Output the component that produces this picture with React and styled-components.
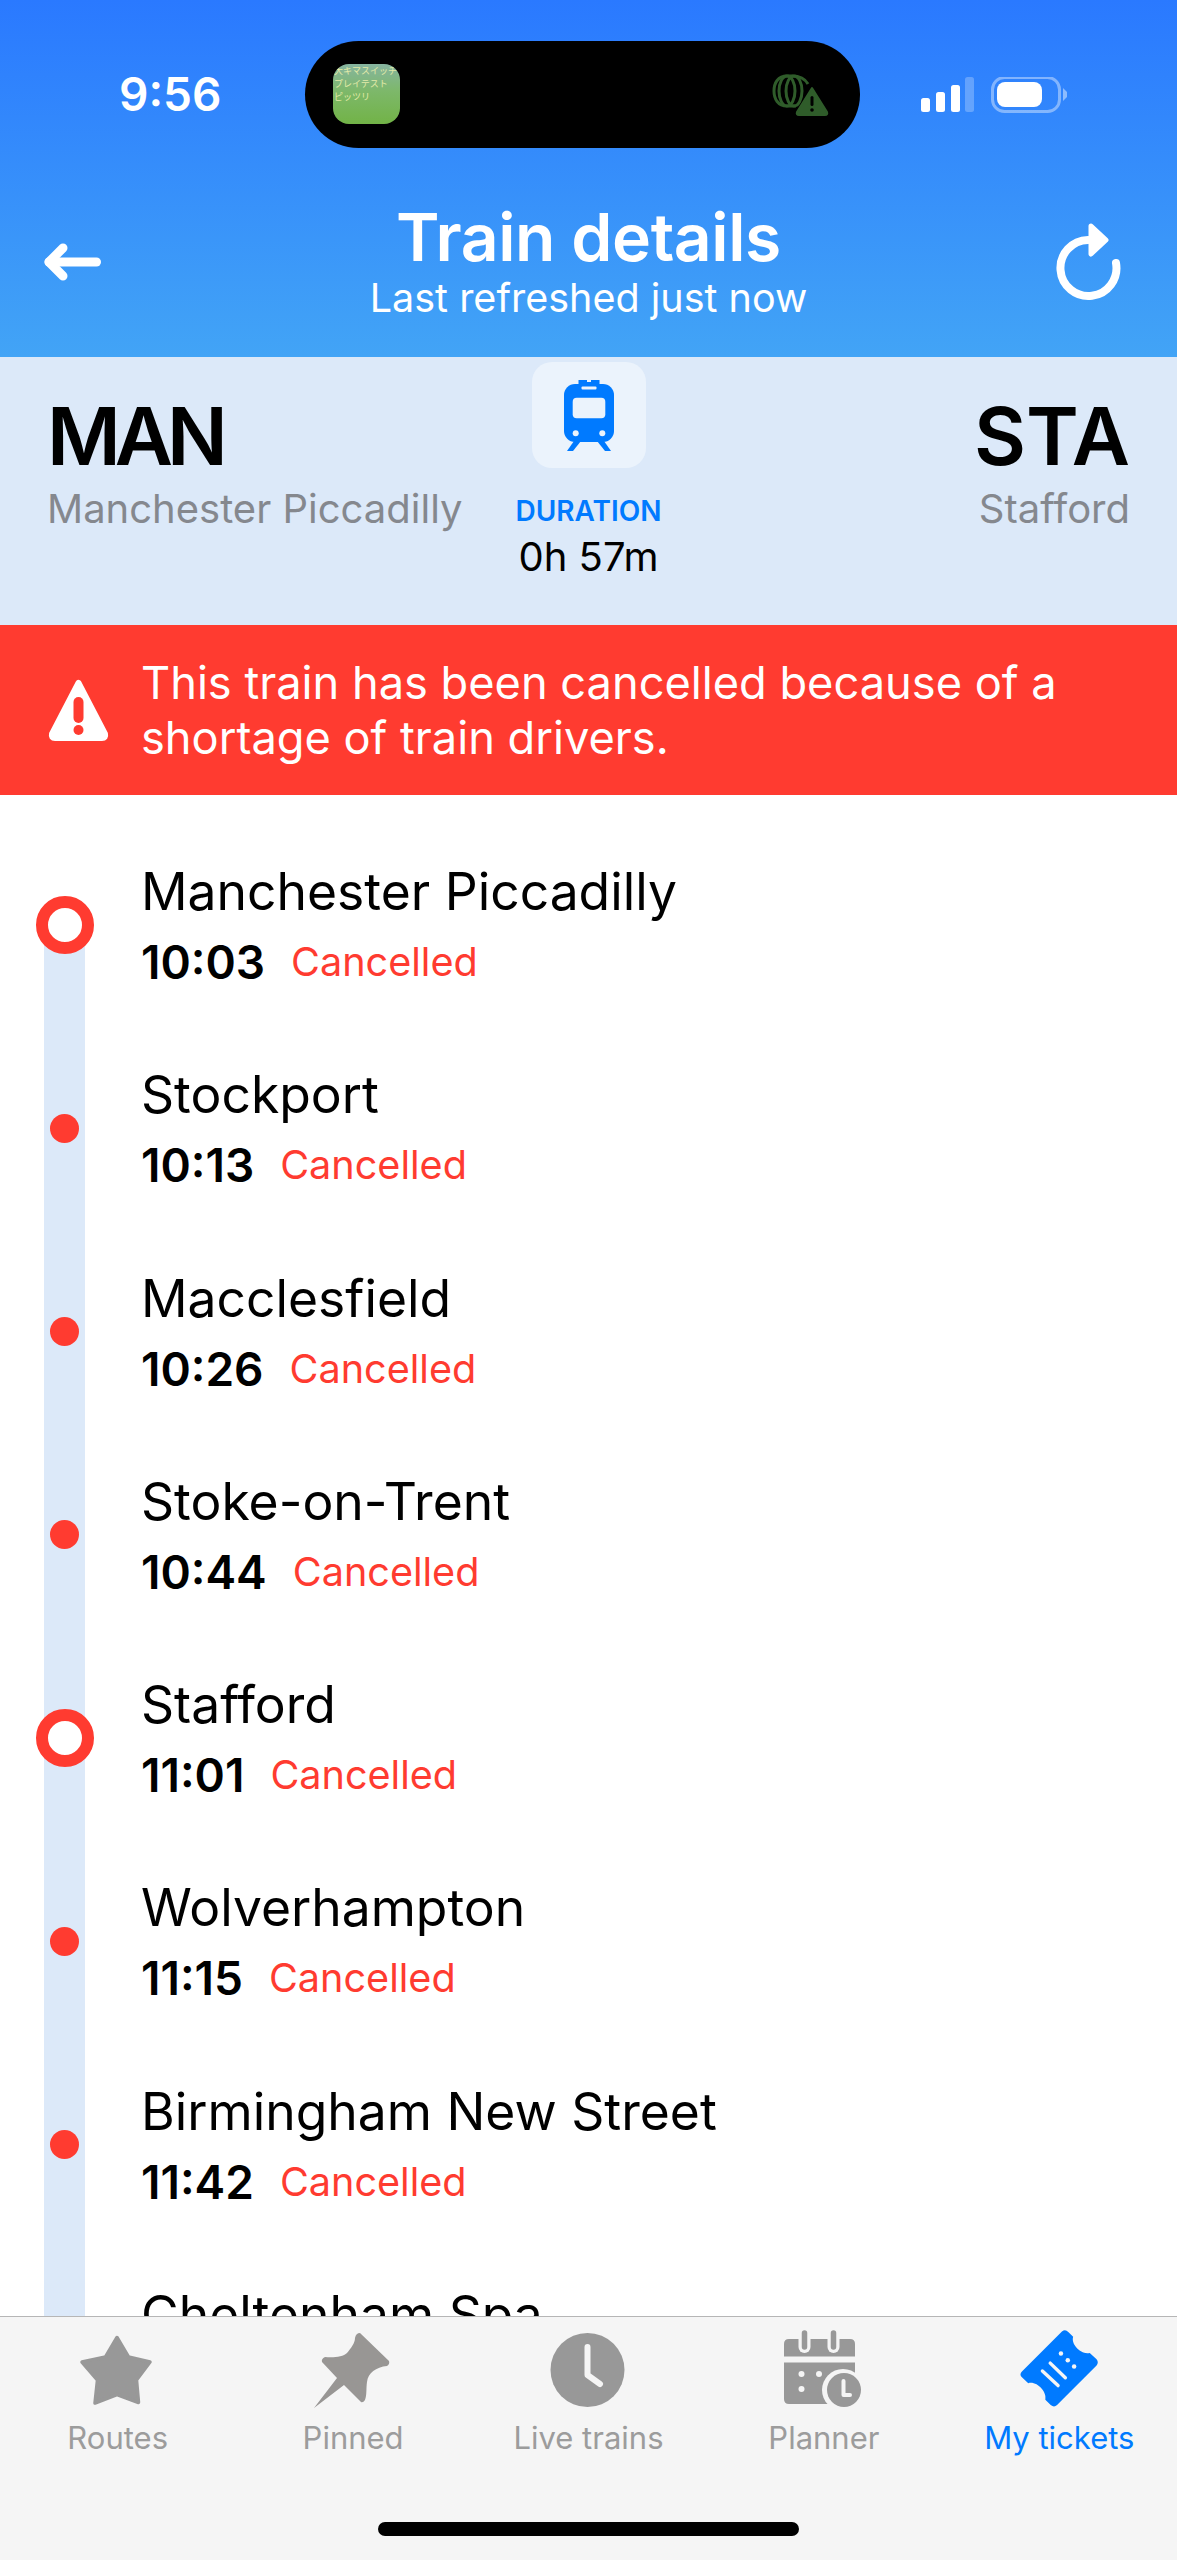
import React from "react";
import styled, { createGlobalStyle } from "styled-components";

const Global = createGlobalStyle`
  html, body { margin: 0; padding: 0; background: #fff; }
  body { font-family: "Inter", "Liberation Sans", sans-serif; }
`;

const Screen = styled.div`
  height: 2560px;
  display: flex;
  flex-direction: column;
  overflow: hidden;
  background: #fff;
`;

const Header = styled.header`
  height: 357px;
  flex-shrink: 0;
  color: #fff;
  background: linear-gradient(180deg, #2a79ff 0%, #42a4f6 100%);
`;

const StatusBar = styled.div`
  display: flex;
  align-items: center;
  padding: 41px 0 0 119px;
`;

const Clock = styled.div`
  width: 186px;
  font-size: 46px;
  font-weight: 600;
  line-height: 107px;
`;

const Island = styled.div`
  width: 555px;
  height: 107px;
  border-radius: 54px;
  background: #000;
  display: flex;
  align-items: center;
  justify-content: space-between;
  padding: 0 31px 0 28px;
  box-sizing: border-box;
`;

const Thumb = styled.div`
  width: 67px;
  height: 60px;
  margin-top: -2px;
  border-radius: 16px;
  overflow: hidden;
  background: linear-gradient(180deg, #86b4a0 0%, #7db86a 45%, #72b347 100%);
  color: #e3eba8;
  font-family: "Noto Sans CJK JP", sans-serif;
  font-size: 9px;
  line-height: 13px;
  white-space: nowrap;
  padding-left: 1px;
  box-sizing: border-box;
`;

const StatusIcons = styled.svg`
  margin-left: 61px;
  flex-shrink: 0;
`;

const Nav = styled.div`
  display: grid;
  grid-template-columns: 1fr auto 1fr;
  align-items: center;
  margin-top: 53px;
  padding: 0 44px;
`;

const TitleBlock = styled.div`
  text-align: center;
`;

const Title = styled.h1`
  margin: 0;
  font-size: 66px;
  font-weight: 600;
  line-height: 72px;
  letter-spacing: -0.4px;
`;

const Subtitle = styled.div`
  font-size: 39.5px;
  line-height: 48px;
  font-weight: 400;
  padding-top: 1px;
`;

const BackIcon = styled.svg`
  justify-self: start;
`;

const RefreshIcon = styled.svg`
  justify-self: end;
  margin-right: 11px;
`;

const Band = styled.section`
  height: 268px;
  flex-shrink: 0;
  box-sizing: border-box;
  background: #dce9f9;
  display: grid;
  grid-template-columns: 1fr auto 1fr;
  padding: 5px 47px 0;
`;

const Station = styled.div`
  padding-top: 29px;
  text-align: ${(p) => (p.$right ? "right" : "left")};
`;

const Code = styled.div`
  font-size: 80px;
  font-weight: 600;
  line-height: 90px;
  color: #000;
  letter-spacing: ${(p) => p.$spacing || "0"};
`;

const StationName = styled.div`
  margin-top: 4px;
  font-size: 40px;
  line-height: 48px;
  color: #85888e;
  white-space: nowrap;
`;

const Middle = styled.div`
  display: flex;
  flex-direction: column;
  align-items: center;
`;

const IconTile = styled.div`
  width: 114px;
  height: 106px;
  border-radius: 20px;
  background: #ebf3fc;
  display: flex;
  align-items: center;
  justify-content: center;
`;

const DurationLabel = styled.div`
  margin-top: 26px;
  font-size: 28px;
  font-weight: 600;
  line-height: 34px;
  color: #007aff;
`;

const DurationValue = styled.div`
  margin-top: 6px;
  font-size: 40px;
  line-height: 46px;
  color: #000;
`;

const Alert = styled.section`
  height: 170px;
  flex-shrink: 0;
  background: #ff3b30;
  display: flex;
  align-items: center;
  gap: 31px;
  padding-left: 47px;
`;

const AlertText = styled.div`
  width: 960px;
  color: #fff;
  font-size: 45.2px;
  line-height: 55px;
`;

const Timeline = styled.main`
  flex: 1;
  min-height: 0;
  overflow: hidden;
  padding-top: 28.35px;
`;

const Stop = styled.div`
  height: 203.3px;
  display: flex;
  padding-left: 44px;
`;

const Rail = styled.div`
  width: 41px;
  flex-shrink: 0;
  display: flex;
  align-items: center;
  justify-content: center;
  background: ${(p) =>
    p.$first ? "linear-gradient(180deg, transparent 50%, #dce9f9 50%)" : "#dce9f9"};
`;

const Ring = styled.div`
  width: 58px;
  height: 58px;
  flex-shrink: 0;
  box-sizing: border-box;
  border: 12px solid #ff3b30;
  border-radius: 50%;
  background: #fff;
`;

const Dot = styled.div`
  width: 29px;
  height: 29px;
  flex-shrink: 0;
  border-radius: 50%;
  background: #ff3b30;
`;

const StopText = styled.div`
  margin-left: 56px;
  padding-top: 37.65px;
`;

const StopName = styled.div`
  font-size: 51.6px;
  line-height: 60px;
  color: #000;
`;

const StopMeta = styled.div`
  display: flex;
  align-items: center;
  gap: 26px;
  margin-top: 11px;
  line-height: 60px;
`;

const Time = styled.span`
  font-size: 46px;
  font-weight: 600;
  color: #000;
`;

const Cancelled = styled.span`
  font-size: 39.6px;
  color: #ff3b30;
`;

const TabBar = styled.nav`
  flex-shrink: 0;
  height: 244px;
  box-sizing: border-box;
  position: relative;
  background: #f5f5f5;
  border-top: 1px solid #b6b6b6;
  padding-top: 12px;
`;

const Tabs = styled.div`
  display: grid;
  grid-template-columns: repeat(5, 1fr);
`;

const Tab = styled.div`
  display: flex;
  flex-direction: column;
  align-items: center;
  gap: 11px;
`;

const TabLabel = styled.span`
  font-size: 31px;
  line-height: 36px;
  color: ${(p) => (p.$active ? "#007aff" : "#9c9c9c")};
`;

const HomeBar = styled.div`
  width: 421px;
  height: 14px;
  margin: 66px auto 0;
  border-radius: 7px;
  background: #000;
`;

const GRAY = "#989898";

const StarIcon = () => (
  <svg width="80" height="80" viewBox="0 0 80 80">
    <polygon
      points="39,8.5 50.5,28 72,33 58.5,51 60.5,73.5 39,65.5 17,74 19.5,51 4,33 27.5,28"
      fill={GRAY}
      stroke={GRAY}
      strokeWidth="3.5"
      strokeLinejoin="round"
    />
  </svg>
);

const PinIcon = () => (
  <svg width="80" height="80" viewBox="0 0 80 80">
    <path
      d="M47 4 L76 32 Q77 35 74 37 C63 38 55 44 54 53 C53 60 54 66 52 71 Q50 74 48 73 L31 56 L1 79 L24 49 L9 33 Q8 30 12 28 C20 29 30 28 34 24 C38 19 42 14 42 9 Q43 4 47 4Z"
      fill="#989694"
    />
  </svg>
);

const ClockIcon = () => (
  <svg width="80" height="80" viewBox="0 0 80 80">
    <circle cx="39.5" cy="41" r="37" fill={GRAY} />
    <polyline
      points="39.5,18 39.5,46 52,55"
      fill="none"
      stroke="#f5f5f5"
      strokeWidth="6"
      strokeLinecap="round"
      strokeLinejoin="round"
    />
  </svg>
);

const CalendarIcon = () => (
  <svg width="80" height="80" viewBox="0 0 80 80">
    <path d="M0 27.5 V15 Q0 10 5 10 H66 Q71 10 71 15 V27.5 Z" fill={GRAY} />
    <path d="M0 33.5 H71 V75 H5 Q0 75 0 70 Z" fill={GRAY} />
    <line x1="20.5" y1="4" x2="20.5" y2="18" stroke="#f5f5f5" strokeWidth="12" strokeLinecap="round" />
    <line x1="49.5" y1="4" x2="49.5" y2="18" stroke="#f5f5f5" strokeWidth="12" strokeLinecap="round" />
    <line x1="20.5" y1="4" x2="20.5" y2="18" stroke={GRAY} strokeWidth="5.5" strokeLinecap="round" />
    <line x1="49.5" y1="4" x2="49.5" y2="18" stroke={GRAY} strokeWidth="5.5" strokeLinecap="round" />
    <circle cx="17.5" cy="45" r="3" fill="#f5f5f5" />
    <circle cx="35" cy="45" r="3" fill="#f5f5f5" />
    <circle cx="17.5" cy="60" r="3" fill="#f5f5f5" />
    <circle cx="59" cy="61" r="21" fill="#f5f5f5" />
    <circle cx="60" cy="61" r="17" fill={GRAY} />
    <polyline
      points="59.5,52 59.5,66 66,66"
      fill="none"
      stroke="#f5f5f5"
      strokeWidth="4"
      strokeLinecap="round"
      strokeLinejoin="round"
    />
  </svg>
);

const TicketIcon = () => (
  <svg width="80" height="80" viewBox="0 0 80 82">
    <path
      d="M43 2.5 Q46.5 0 49.5 3 L54.5 8 C52 16 63 27 71.5 24.5 L78.5 31 Q81 34 78.5 37.5 L38 78 Q35 81 31.5 78 L26 72.5 C28 64 17 53 8.5 55.5 L2 49.5 Q-1 46.5 2 43.5 Z"
      fill="#007aff"
    />
    <line x1="23" y1="43" x2="39" y2="58" stroke="#f5f5f5" strokeWidth="3.5" strokeLinecap="round" />
    <line x1="31" y1="35" x2="46.5" y2="50" stroke="#f5f5f5" strokeWidth="3.5" strokeLinecap="round" />
    <circle cx="42" cy="25" r="2.3" fill="#f5f5f5" />
    <circle cx="49" cy="32" r="2.3" fill="#f5f5f5" />
    <circle cx="55.5" cy="38.5" r="2.3" fill="#f5f5f5" />
  </svg>
);

const TrainIcon = () => (
  <svg width="50" height="71" viewBox="0 0 50 71">
    <path d="M14.5 0 H23 V2 H27 V0 H35.5 V5 H14.5 Z" fill="#007aff" />
    <rect x="0" y="4" width="50" height="58" rx="11" fill="#007aff" />
    <rect x="17.5" y="6.5" width="15" height="3" rx="1" fill="#ebf3fc" />
    <rect x="8.7" y="17.7" width="32.6" height="20.6" rx="4" fill="#ebf3fc" />
    <circle cx="11.7" cy="53.3" r="3" fill="#ebf3fc" />
    <circle cx="38.3" cy="53.3" r="3" fill="#ebf3fc" />
    <polygon points="10,61 17,61 9,71 3,71" fill="#007aff" />
    <polygon points="33,61 40,61 47,71 41,71" fill="#007aff" />
  </svg>
);

const WarningIcon = () => (
  <svg width="63" height="64" viewBox="0 0 63 64">
    <path
      d="M31.5 5 L58 56 Q59 60 55 60 H8 Q4 60 5 56 Z"
      fill="#fff"
      stroke="#fff"
      strokeWidth="6"
      strokeLinejoin="round"
    />
    <rect x="26.5" y="19" width="10" height="26" rx="5" fill="#ff3b30" />
    <circle cx="31.5" cy="52" r="5" fill="#ff3b30" />
  </svg>
);

const CarPlayWarning = () => (
  <svg width="57" height="42" viewBox="0 0 57 42">
    <g fill="none" stroke="#2f5c2a" strokeWidth="3">
      <path d="M36 10 C32 3 26 2 20 2 H15 C6 2 2 9 2 17 C2 25 6 32 15 32 H24" />
      <ellipse cx="15" cy="17" rx="8" ry="15" />
      <ellipse cx="22" cy="17" rx="8" ry="15" />
    </g>
    <path d="M40 14 L55 38 Q56 41 53 41 H27 Q24 41 25 38 Z" fill="#2f5c2a" stroke="#2f5c2a" strokeWidth="2" strokeLinejoin="round" />
    <rect x="38.5" y="22" width="3" height="10" rx="1.5" fill="#000" />
    <circle cx="40" cy="36" r="1.8" fill="#000" />
  </svg>
);

const stops = [
  ["Manchester Piccadilly", "10:03", true],
  ["Stockport", "10:13"],
  ["Macclesfield", "10:26"],
  ["Stoke-on-Trent", "10:44"],
  ["Stafford", "11:01", true],
  ["Wolverhampton", "11:15"],
  ["Birmingham New Street", "11:42"],
  ["Cheltenham Spa"],
];

const tabs = [
  ["Routes", StarIcon],
  ["Pinned", PinIcon],
  ["Live trains", ClockIcon],
  ["Planner", CalendarIcon],
  ["My tickets", TicketIcon, true],
];

export default function App() {
  return (
    <Screen>
      <Global />
      <Header>
        <StatusBar>
          <Clock>9:56</Clock>
          <Island>
            <Thumb>
              大キマスイッチ
              <br />
              プレイテスト
              <br />
              ピッツリ
            </Thumb>
            <CarPlayWarning />
          </Island>
          <StatusIcons width="146" height="36" viewBox="0 0 146 36">
            <rect x="0" y="21" width="9" height="14" rx="2.5" fill="#fff" />
            <rect x="15" y="15" width="9" height="20" rx="2.5" fill="#fff" />
            <rect x="30" y="8" width="9" height="27" rx="2.5" fill="#fff" />
            <rect x="44" y="0" width="9" height="35" rx="2.5" fill="#fff" fillOpacity="0.25" />
            <rect x="71.5" y="0.5" width="67" height="34" rx="12" fill="none" stroke="#fff" strokeOpacity="0.4" strokeWidth="3" />
            <rect x="76" y="5" width="45" height="25" rx="8" fill="#fff" />
            <path d="M142 11 L146 15 V20 L142 24 Z" fill="#fff" fillOpacity="0.45" />
          </StatusIcons>
        </StatusBar>
        <Nav>
          <BackIcon width="60" height="38" viewBox="0 0 60 38">
            <g fill="none" stroke="#fff" strokeWidth="9" strokeLinecap="round" strokeLinejoin="round">
              <polyline points="19,5 5,19 19,33" />
              <line x1="5" y1="19" x2="52.5" y2="19" />
            </g>
          </BackIcon>
          <TitleBlock>
            <Title>Train details</Title>
            <Subtitle>Last refreshed just now</Subtitle>
          </TitleBlock>
          <RefreshIcon width="66" height="80" viewBox="0 0 66 80">
            <path d="M60 41 A28 28 0 1 1 32 18" fill="none" stroke="#fff" strokeWidth="8" strokeLinecap="round" />
            <polygon points="35,4 50,18 35,32" fill="#fff" stroke="#fff" strokeWidth="5" strokeLinejoin="round" />
          </RefreshIcon>
        </Nav>
      </Header>

      <Band>
        <Station>
          <Code $spacing="-6px">MAN</Code>
          <StationName>Manchester Piccadilly</StationName>
        </Station>
        <Middle>
          <IconTile>
            <TrainIcon />
          </IconTile>
          <DurationLabel>DURATION</DurationLabel>
          <DurationValue>0h 57m</DurationValue>
        </Middle>
        <Station $right>
          <Code>STA</Code>
          <StationName>Stafford</StationName>
        </Station>
      </Band>

      <Alert>
        <WarningIcon />
        <AlertText>This train has been cancelled because of a shortage of train drivers.</AlertText>
      </Alert>

      <Timeline>
        {stops.map(([name, time, major], i) => (
          <Stop key={name}>
            <Rail $first={i === 0}>{major ? <Ring /> : <Dot />}</Rail>
            <StopText>
              <StopName>{name}</StopName>
              {time && (
                <StopMeta>
                  <Time>{time}</Time>
                  <Cancelled>Cancelled</Cancelled>
                </StopMeta>
              )}
            </StopText>
          </Stop>
        ))}
      </Timeline>

      <TabBar>
        <Tabs>
          {tabs.map(([label, Icon, active]) => (
            <Tab key={label}>
              <Icon />
              <TabLabel $active={active}>{label}</TabLabel>
            </Tab>
          ))}
        </Tabs>
        <HomeBar />
      </TabBar>
    </Screen>
  );
}
